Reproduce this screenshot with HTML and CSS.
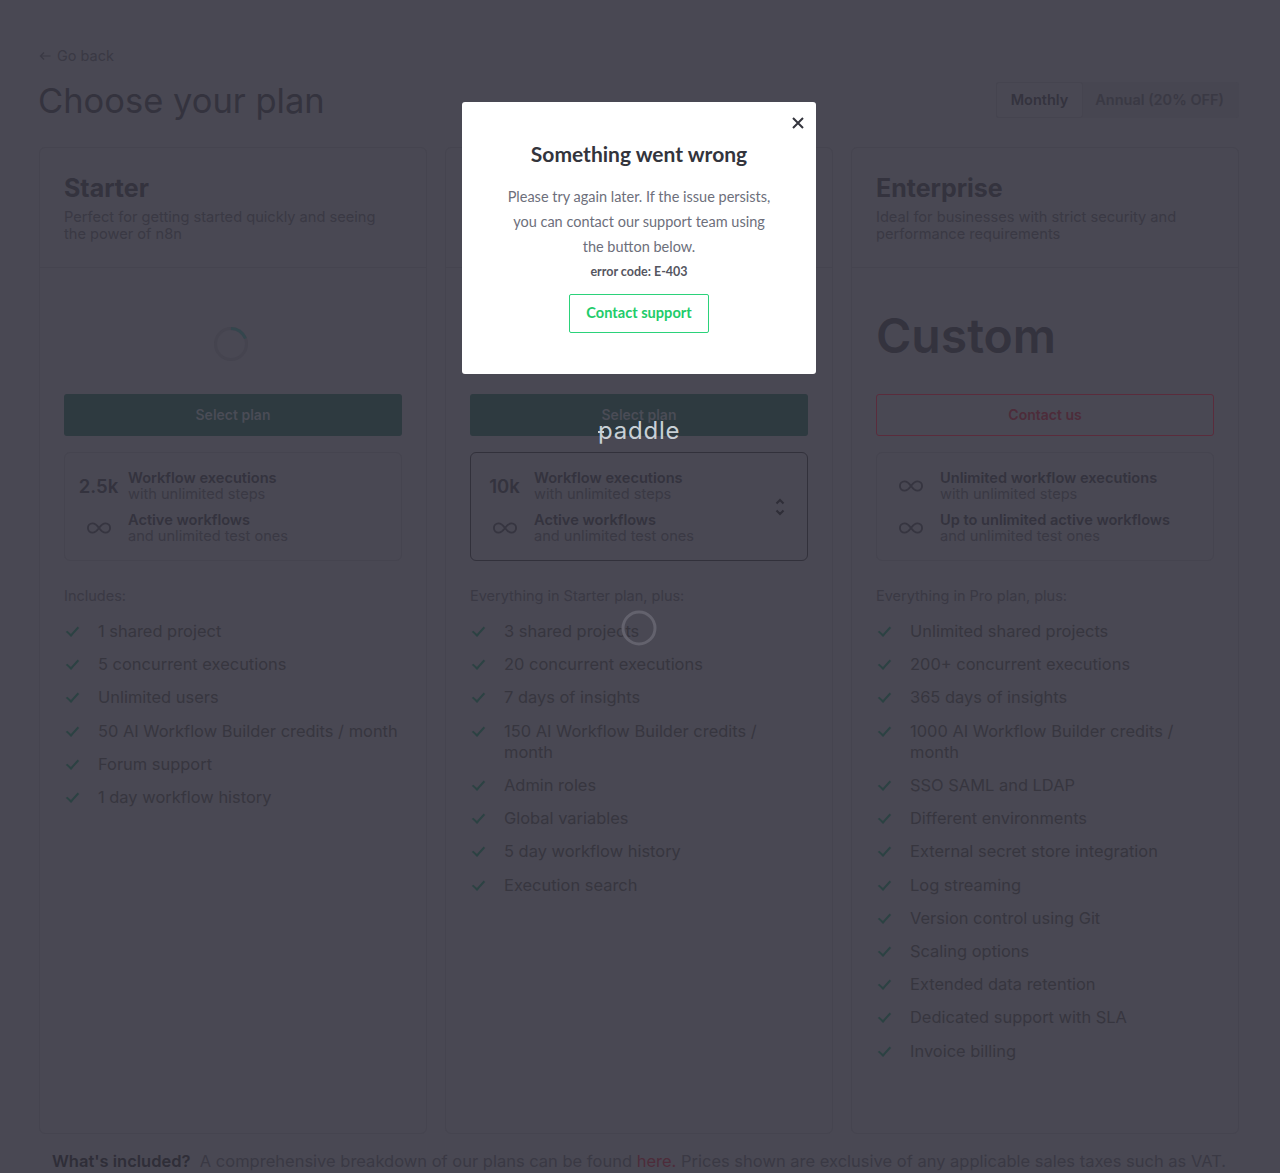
FILE: index.html
```html
<!DOCTYPE html>
<html>
<head>
  <title>Choose your plan</title>
  <link rel="stylesheet" href="styles.css">
</head>
<body>
<div class="page">
  <a class="back"><svg class="back_arrow" width="12" height="10" viewBox="0 0 12 10" fill="none"><path d="M11.500 5H1.500M5 1.500L1.500 5L5 8.500" stroke="#3a3944" stroke-width="1.200"/></svg>Go back</a>
  <div class="top">
    <h1>Choose your plan</h1>
    <div class="toggle">
      <div class="toggle_on">Monthly</div>
      <div class="toggle_off">Annual (20% OFF)</div>
    </div>
  </div>

  <div class="plans">

    <div class="plan">
      <div class="plan_head">
        <h2>Starter</h2>
        <p>Perfect for getting started quickly and seeing the power of n8n</p>
      </div>
      <div class="plan_body">
        <div class="price">
          <svg class="spin" width="36" height="36" viewBox="0 0 36 36" fill="none">
            <circle cx="18" cy="18" r="15.500" stroke="#45444f" stroke-width="3"/>
            <path d="M18 2.500A15.500 15.500 0 0 1 32.500 12.500" stroke="#34464d" stroke-width="3"/>
          </svg>
        </div>
        <div class="btn_select">Select plan</div>
        <div class="limits">
          <div class="limit">
            <div class="limit_val">2.5k</div>
            <div class="limit_txt"><b>Workflow executions</b><span>with unlimited steps</span></div>
          </div>
          <div class="limit">
            <div class="limit_val"><svg class="inf" width="24" height="12" viewBox="0 0 26 12" fill="none"><path d="M13 6C10.500 2.500 8.500 1 6 1A5 5 0 0 0 6 11C8.500 11 10.500 9.500 13 6C15.500 2.500 17.500 1 20 1A5 5 0 0 1 20 11C17.500 11 15.500 9.500 13 6Z" stroke="#363540" stroke-width="2"/></svg></div>
            <div class="limit_txt"><b>Active workflows</b><span>and unlimited test ones</span></div>
          </div>
        </div>
        <div class="incl">Includes:</div>
        <ul class="feats">
          <li>1 shared project</li>
          <li>5 concurrent executions</li>
          <li>Unlimited users</li>
          <li>50 AI Workflow Builder credits / month</li>
          <li>Forum support</li>
          <li>1 day workflow history</li>
        </ul>
      </div>
    </div>

    <div class="plan">
      <div class="plan_head"></div>
      <div class="plan_body">
        <div class="price"></div>
        <div class="btn_select">Select plan</div>
        <div class="limits limits_pick">
          <div class="limit">
            <div class="limit_val">10k</div>
            <div class="limit_txt"><b>Workflow executions</b><span>with unlimited steps</span></div>
          </div>
          <div class="limit">
            <div class="limit_val"><svg class="inf" width="24" height="12" viewBox="0 0 26 12" fill="none"><path d="M13 6C10.500 2.500 8.500 1 6 1A5 5 0 0 0 6 11C8.500 11 10.500 9.500 13 6C15.500 2.500 17.500 1 20 1A5 5 0 0 1 20 11C17.500 11 15.500 9.500 13 6Z" stroke="#363540" stroke-width="2"/></svg></div>
            <div class="limit_txt"><b>Active workflows</b><span>and unlimited test ones</span></div>
          </div>
          <svg class="updown" width="10" height="18" viewBox="0 0 10 18" fill="none"><path d="M1.500 5.500L5 2L8.500 5.500M1.500 12.500L5 16L8.500 12.500" stroke="#2f2e38" stroke-width="2"/></svg>
        </div>
        <div class="incl">Everything in Starter plan, plus:</div>
        <ul class="feats">
          <li>3 shared projects</li>
          <li>20 concurrent executions</li>
          <li>7 days of insights</li>
          <li>150 AI Workflow Builder credits / month</li>
          <li>Admin roles</li>
          <li>Global variables</li>
          <li>5 day workflow history</li>
          <li>Execution search</li>
        </ul>
      </div>
    </div>

    <div class="plan">
      <div class="plan_head">
        <h2>Enterprise</h2>
        <p>Ideal for businesses with strict security and performance requirements</p>
      </div>
      <div class="plan_body">
        <div class="price price_custom">Custom</div>
        <div class="btn_contact">Contact us</div>
        <div class="limits">
          <div class="limit">
            <div class="limit_val"><svg class="inf" width="24" height="12" viewBox="0 0 26 12" fill="none"><path d="M13 6C10.500 2.500 8.500 1 6 1A5 5 0 0 0 6 11C8.500 11 10.500 9.500 13 6C15.500 2.500 17.500 1 20 1A5 5 0 0 1 20 11C17.500 11 15.500 9.500 13 6Z" stroke="#363540" stroke-width="2"/></svg></div>
            <div class="limit_txt"><b>Unlimited workflow executions</b><span>with unlimited steps</span></div>
          </div>
          <div class="limit">
            <div class="limit_val"><svg class="inf" width="24" height="12" viewBox="0 0 26 12" fill="none"><path d="M13 6C10.500 2.500 8.500 1 6 1A5 5 0 0 0 6 11C8.500 11 10.500 9.500 13 6C15.500 2.500 17.500 1 20 1A5 5 0 0 1 20 11C17.500 11 15.500 9.500 13 6Z" stroke="#363540" stroke-width="2"/></svg></div>
            <div class="limit_txt"><b>Up to unlimited active workflows</b><span>and unlimited test ones</span></div>
          </div>
        </div>
        <div class="incl">Everything in Pro plan, plus:</div>
        <ul class="feats">
          <li>Unlimited shared projects</li>
          <li>200+ concurrent executions</li>
          <li>365 days of insights</li>
          <li>1000 AI Workflow Builder credits / month</li>
          <li>SSO SAML and LDAP</li>
          <li>Different environments</li>
          <li>External secret store integration</li>
          <li>Log streaming</li>
          <li>Version control using Git</li>
          <li>Scaling options</li>
          <li>Extended data retention</li>
          <li>Dedicated support with SLA</li>
          <li>Invoice billing</li>
        </ul>
      </div>
    </div>

  </div>

  <p class="note"><b>What's included?</b>&nbsp; A comprehensive breakdown of our plans can be found <a>here.</a> Prices shown are exclusive of any applicable sales taxes such as VAT.</p>
</div>

<!-- checkout overlay -->
<div class="paddle_logo"><span class="paddle_plus"></span>paddle</div>
<svg class="paddle_spin" width="36" height="36" viewBox="0 0 36 36" fill="none"><circle cx="18" cy="18" r="16" stroke="#63626d" stroke-width="3"/></svg>

<div class="modal">
  <svg class="modal_close" width="14" height="14" viewBox="0 0 14 14" fill="none"><path d="M2 2L12 12M12 2L2 12" stroke="#34353d" stroke-width="2"/></svg>
  <h3>Something went wrong</h3>
  <p class="modal_txt">Please try again later. If the issue persists,<br>you can contact our support team using<br>the button below.</p>
  <p class="modal_code">error code: E-403</p>
  <div class="modal_btn">Contact support</div>
</div>
</body>
</html>
```

FILE: styles.css
```css
html, body { margin:0; padding:0; height:1173px; overflow:hidden; }
body { background:#494853; font-family:Inter, "Liberation Sans", sans-serif; color:#3a3944; position:relative; }
h1, h2, h3, p, ul { margin:0; padding:0; }

.page { padding:46px 41px 0 39px; }
.back { display:flex; align-items:center; font-size:14.500px; line-height:20px; color:#3a3944; }
.back_arrow { margin-right:6px; }

.top { display:flex; justify-content:space-between; align-items:center; margin-top:11px; height:46px; }
h1 { font-size:34.500px; font-weight:400; line-height:46px; color:#34333e; margin:2px 0 0 -1px; }
.toggle { display:flex; background:#474651; height:36px; font-size:14.500px; font-weight:600; border-radius:3px; }
.toggle_on { display:flex; align-items:center; padding:0 14px 2px; border:1px solid #45444f; background:#494853; color:#34333e; border-radius:3px; }
.toggle_off { display:flex; align-items:center; padding:0 15px 2px 12px; color:#3a3944; }

.plans { display:flex; gap:18px; margin-top:24px; }
.plan { flex:1; height:985px; border:1px solid #45444f; border-radius:6px; }
.plan_head { height:120px; box-sizing:border-box; padding:25px 24px 0; border-bottom:1px solid #45444f; }
h2 { font-size:25px; font-weight:700; line-height:30px; color:#34333e; }
.plan_head p { font-size:14.620px; line-height:17px; color:#3a3944; margin-top:6px; max-width:325px; }
.plan_body { padding:0 24px; }

.price { height:126px; display:flex; align-items:center; justify-content:center; }
.spin { margin-left:-4px; margin-top:26px; }
.price_custom { justify-content:flex-start; font-size:48px; font-weight:600; color:#34333e; padding-top:8px; box-sizing:border-box; }

.btn_select { height:42px; line-height:42px; text-align:center; font-size:14px; font-weight:600; background:#2e3a40; color:#4a4c56; border-radius:3px; }
.btn_contact { height:40px; line-height:40px; text-align:center; font-size:14px; font-weight:600; border:1px solid #5a2c3c; color:#4d2c3a; border-radius:3px; }

.limits { position:relative; margin-top:16px; height:109px; box-sizing:border-box; padding:12px 0 0; border:1px solid #45444f; border-radius:6px; }
.limits_pick { border-color:#32313b; }
.limit { display:flex; align-items:center; height:42px; }
.limit_val { width:55px; margin:0 2px 0 6px; text-align:center; font-size:18.500px; font-weight:600; color:#34333e; }
.inf { display:block; margin:0 auto; }
.limit_txt { font-size:14.600px; line-height:16.500px; }
.limit_txt b { display:block; font-weight:600; color:#34333e; }
.limit_txt span { display:block; color:#3a3944; }
.updown { position:absolute; right:22px; top:45px; }

.incl { margin-top:25px; font-size:14.500px; line-height:20px; color:#3a3944; }
.feats { list-style:none; margin-top:15px; }
.feats li { position:relative; padding-left:34px; font-size:16.450px; line-height:21px; margin-bottom:12.220px; color:#37363f; }
.feats li:before { content:""; position:absolute; left:5px; top:3px; width:5px; height:10px; border:solid #2c4243; border-width:0 2.500px 2.500px 0; transform:rotate(42deg); }

.note { margin-top:16px; padding-left:13px; font-size:16.500px; line-height:22px; white-space:nowrap; color:#3a3944; }
.note b { font-weight:600; color:#2f2e38; }
.note a { color:#4d2c3a; }

/* paddle loader */
.paddle_logo { position:absolute; left:598px; top:415px; font-size:24px; line-height:32px; font-weight:400; color:#c8d0d6; letter-spacing:0.8px; }
.paddle_plus { position:absolute; left:0; top:16px; width:6px; height:2px; background:#c8d0d6; }
.paddle_spin { position:absolute; left:621px; top:610px; }

/* modal */
.modal { position:absolute; left:462px; top:102px; width:354px; height:272px; box-sizing:border-box; background:#fff; border-radius:3px; text-align:center; font-family:Lato, sans-serif; padding-top:38px; }
.modal_close { position:absolute; right:11px; top:14px; }
h3 { font-size:21px; font-weight:700; line-height:28px; color:#33343c; }
.modal_txt { margin-top:16px; font-size:14.500px; line-height:25px; color:#6d6f7b; }
.modal_code { margin-top:3px; font-size:12.500px; font-weight:700; line-height:20px; color:#55565f; }
.modal_btn { width:138px; height:37px; line-height:36px; margin:12px auto 0; border:1px solid #2bd27a; border-radius:2px; font-size:14.600px; font-weight:700; color:#22cc6a; }
```
